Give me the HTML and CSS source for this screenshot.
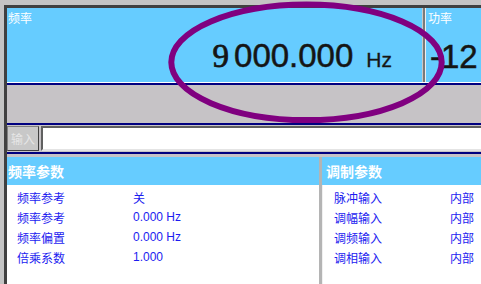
FILE: index.html
```html
<!DOCTYPE html>
<html lang="zh">
<head>
<meta charset="utf-8">
<link rel="stylesheet" href="styles.css">
</head>
<body>
<div class="screen">
  <div class="top">
    <div class="cell freq">
      <div class="cap">频率</div>
      <div class="reading"><span class="d9">9</span><span class="digits">000.000</span><span class="unit">Hz</span></div>
    </div>
    <div class="cell power">
      <div class="cap">功率</div>
      <div class="reading"><span class="digits">-12</span></div>
    </div>
  </div>
  <div class="band"></div>
  <div class="inputrow">
    <div class="btn">输入</div>
    <div class="field"></div>
  </div>
  <div class="panels">
    <section class="panel left">
      <div class="head">频率参数</div>
      <div class="rows">
        <div class="row"><span class="lbl">频率参考</span><span class="val">关</span></div>
        <div class="row"><span class="lbl">频率参考</span><span class="val">0.000 Hz</span></div>
        <div class="row"><span class="lbl">频率偏置</span><span class="val">0.000 Hz</span></div>
        <div class="row"><span class="lbl">倍乘系数</span><span class="val">1.000</span></div>
      </div>
    </section>
    <section class="panel right">
      <div class="head">调制参数</div>
      <div class="rows">
        <div class="row"><span class="lbl">脉冲输入</span><span class="val">内部</span></div>
        <div class="row"><span class="lbl">调幅输入</span><span class="val">内部</span></div>
        <div class="row"><span class="lbl">调频输入</span><span class="val">内部</span></div>
        <div class="row"><span class="lbl">调相输入</span><span class="val">内部</span></div>
      </div>
    </section>
  </div>
</div>
<svg class="ring" width="481" height="284" viewBox="0 0 481 284">
  <ellipse cx="306.5" cy="62.3" rx="135.2" ry="57.8" fill="none" stroke="#800080" stroke-width="6"/>
</svg>
</body>
</html>
```

FILE: styles.css
```css
html, body {
  margin: 0;
  padding: 0;
}
body {
  width: 481px;
  height: 284px;
  overflow: hidden;
  background: #c4c4c4;
  position: relative;
  font-family: "Noto Sans CJK SC", "Liberation Sans", sans-serif;
}
.screen {
  margin: 5px 0 0 4px;
  border-top: 3px solid #404040;
  border-left: 3px solid #404040;
  width: 474px;
  height: 276px;
  background: #c6c3c6;
}
.top {
  display: flex;
  height: 74px;
  border-bottom: 1px solid #ffffff;
}
.cell {
  background: #66ccff;
  display: flex;
  flex-direction: column;
  justify-content: space-between;
}
.freq {
  width: 416px;
  flex: none;
}
.power {
  flex: 1;
  border-left: 2px solid #7a7a7a;
  box-shadow: -1px 0 0 #c8c8c8, inset 1px 0 0 #eeeeee;
  overflow: hidden;
}
.cap {
  color: #ffffff;
  font-size: 12px;
  line-height: 14px;
  padding: 3px 0 0 1px;
}
.power .cap {
  padding-left: 3px;
}
.reading {
  display: flex;
  align-items: baseline;
  justify-content: flex-end;
  padding: 0 31px 9px 0;
  color: #151515;
}
.power .reading {
  justify-content: flex-start;
  padding: 0 0 9px 5px;
  white-space: nowrap;
}
.digits {
  font-family: "Liberation Sans", sans-serif;
  font-size: 33px;
  line-height: 33px;
  -webkit-text-stroke: 0.5px #151515;
}
.d9 {
  font-family: "Liberation Serif", serif;
  font-size: 33px;
  line-height: 33px;
  margin-right: 5px;
  -webkit-text-stroke: 0.8px #151515;
}
.unit {
  font-family: "Liberation Sans Narrow", "Liberation Sans", sans-serif;
  font-size: 21px;
  line-height: 1;
  margin-left: 13px;
  -webkit-text-stroke: 0.3px #151515;
}
.band {
  height: 38px;
  border-top: 2px solid #000080;
  border-bottom: 2px solid #000080;
}
.inputrow {
  display: flex;
  padding-top: 1px;
  height: 29px;
  box-sizing: border-box;
  border-bottom: 2px solid #000080;
}
.btn {
  width: 32px;
  height: 25px;
  box-sizing: border-box;
  border: 1px solid #808080;
  border-right-color: #404040;
  border-bottom-color: #404040;
  background: #c8c8c8;
  color: #e6e6e6;
  font-size: 12px;
  line-height: 23px;
  text-align: center;
}
.field {
  flex: 1;
  margin-left: 2px;
  height: 25px;
  box-sizing: border-box;
  background: #ffffff;
  border-top: 2px solid #606060;
  border-left: 2px solid #606060;
  border-bottom: 2px solid #e4e4e4;
}
.panels {
  display: flex;
  margin-top: 3px;
  height: 140px;
}
.panel {
  background: #ffffff;
}
.left {
  width: 312px;
  flex: none;
}
.right {
  flex: 1;
  border-left: 3px solid #b4b4b4;
  box-shadow: inset 1px 0 0 #f0f0f0;
  overflow: hidden;
}
.head {
  background: #66ccff;
  color: #ffffff;
  font-weight: bold;
  font-size: 14px;
  line-height: 28px;
  height: 28px;
  padding-left: 1px;
}
.right .head {
  padding-left: 4px;
}
.rows {
  padding-top: 2px;
}
.row {
  display: flex;
  height: 20px;
  align-items: center;
  font-size: 12px;
  color: #1c1cf0;
  white-space: nowrap;
}
.left .row {
  padding-left: 10px;
}
.right .row {
  padding-left: 12px;
}
.lbl {
  width: 116px;
  flex: none;
}
.val {
  font-family: "Liberation Sans", "Noto Sans CJK SC", sans-serif;
}
.ring {
  position: absolute;
  left: 0;
  top: 0;
  pointer-events: none;
}
```
